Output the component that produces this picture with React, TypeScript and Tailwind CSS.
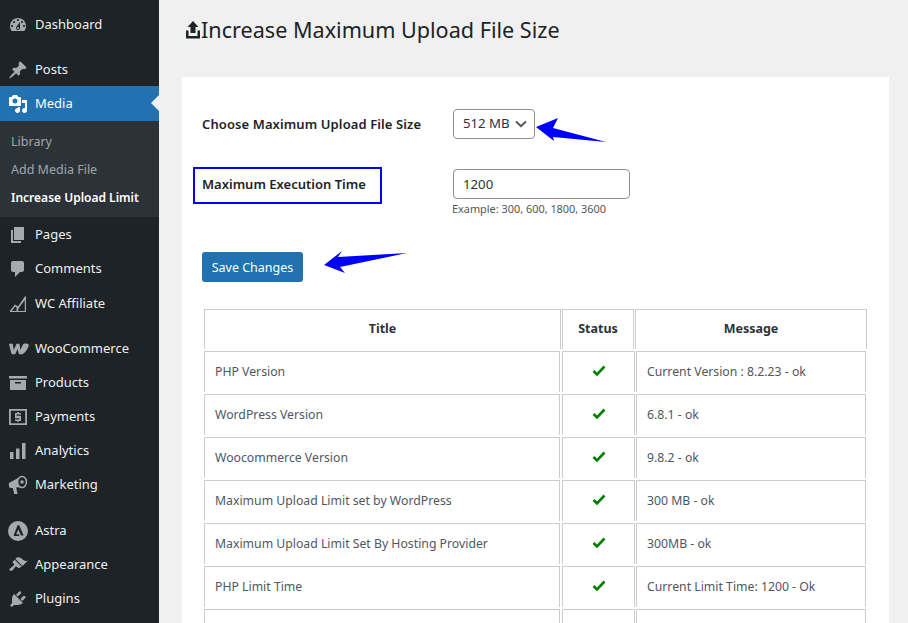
import { ReactNode } from "react"

const Dash = ({ d }: { d: string }) => (
    <svg viewBox="0 0 20 20" className="w-5 h-5 fill-current"><path d={d} /></svg>
)

const icons: Record<string, ReactNode> = {
    dashboard: <Dash d="M3.76 16h12.48c1.1-1.37 1.76-3.11 1.76-5 0-4.42-3.58-8-8-8s-8 3.58-8 8c0 1.89.66 3.63 1.76 5zM10 4c.55 0 1 .45 1 1s-.45 1-1 1-1-.45-1-1 .45-1 1-1zM6 6c.55 0 1 .45 1 1s-.45 1-1 1-1-.45-1-1 .45-1 1-1zm8 0c.55 0 1 .45 1 1s-.45 1-1 1-1-.45-1-1 .45-1 1-1zm-5.37 5.55L12 7v6c0 1.1-.9 2-2 2s-2-.9-2-2c0-.57.24-1.08.63-1.45zM4 10c.55 0 1 .45 1 1s-.45 1-1 1-1-.45-1-1 .45-1 1-1zm12 0c.55 0 1 .45 1 1s-.45 1-1 1-1-.45-1-1 .45-1 1-1zm-5 3c0-.55-.45-1-1-1s-1 .45-1 1 .45 1 1 1 1-.45 1-1z" />,
    posts: <Dash d="M10.44 3.02l1.82-1.82 6.36 6.35-1.83 1.82c-1.05-.68-2.48-.57-3.41.36l-.75.75c-.92.93-1.04 2.35-.35 3.41l-1.83 1.82-2.41-2.41-2.8 2.79c-.42.42-3.38 2.71-3.8 2.29s1.86-3.39 2.28-3.81l2.79-2.79L4.1 9.36l1.83-1.82c1.05.69 2.48.57 3.4-.36l.75-.75c.93-.92 1.05-2.35.36-3.41z" />,
    media: <Dash d="M13 11V4c0-.55-.45-1-1-1h-1.67L9 1H5L3.67 3H2c-.55 0-1 .45-1 1v7c0 .55.45 1 1 1h10c.55 0 1-.45 1-1zM7 4.5c1.38 0 2.5 1.12 2.5 2.5S8.38 9.5 7 9.5 4.5 8.38 4.5 7 5.62 4.5 7 4.5zM14 6h5v10.5c0 1.38-1.12 2.5-2.5 2.5S14 17.88 14 16.5s1.12-2.5 2.5-2.5c.17 0 .34.02.5.05V9h-3V6zm-4 8.05V13h2v3.5c0 1.38-1.12 2.5-2.5 2.5S7 17.88 7 16.5 8.12 14 9.5 14c.17 0 .34.02.5.05z" />,
    pages: <Dash d="M6 15V2h10v13H6zm-1 1h8v2H3V5h2v11z" />,
    comments: <Dash d="M5 2h9c1.1 0 2 .9 2 2v7c0 1.1-.9 2-2 2h-2l-5 5v-5H5c-1.1 0-2-.9-2-2V4c0-1.1.9-2 2-2z" />,
    affiliate: <Dash d="M2 18 L2 16.8 L7 10.5 L10 12.5 L16.5 3 L18 2 V18 Z M3.8 17 H8.5 V13.5 L7.2 12.4 Z M10 17 H16.8 V6 L10.8 14 Z" />,
    woo: (
        <svg viewBox="0 0 22 12" className="w-[21px] h-[12px] fill-current">
            <path d="M1 0.5 H5 L6 7 L9 0.5 H12 L13 7 L15.5 1.5 C16.5 0 20 -0.3 21.5 1 C22.5 3 19 9.5 15 11.5 H11.5 L10 6 L7.5 11.5 H4 C2.8 8 1.6 4 1 0.5 Z" />
        </svg>
    ),
    products: <Dash d="M1 3h18v2.5H1zM2 7h16v10H2zM7 9v1.5h6V9z" />,
    payments: (
        <svg viewBox="0 0 20 20" className="w-5 h-5 fill-current">
            <path fillRule="evenodd" d="M1 2h18v16H1zM2.8 3.8v12.4h14.4V3.8z" />
            <path d="M9.2 5h1.6v1H13v1.6H8.6v1.2H13V14h-2.2v1H9.2v-1H7v-1.6h4.4v-1.2H7V6h2.2z" />
        </svg>
    ),
    analytics: <Dash d="M2 11h3.5v7H2zM8 7.5h3.5V18H8zM14 2h3.5v16H14z" />,
    marketing: (
        <svg viewBox="0 0 20 20" className="w-5 h-5 fill-current">
            <path d="M1 8 L12 2 L13 12 L8.2 12.6 L9.6 19 H6.2 L4.8 13 H2.5 C1 13 0.5 9.5 1 8 Z" />
            <ellipse cx="14" cy="7" rx="4.4" ry="5.6" className="fill-[#1d2327] stroke-current stroke-[1.5]" />
            <circle cx="14" cy="7" r="1.8" />
        </svg>
    ),
    astra: (
        <svg viewBox="0 0 20 20" className="w-5 h-5 fill-current">
            <path fillRule="evenodd" d="M10 0a10 10 0 1 0 0 20a10 10 0 0 0 0-20zM9.6 4.2h1.6L15.6 14.6H13L10.4 8.4L8 13.2H10.6L11.5 15H6.4L5.6 14.6z" />
        </svg>
    ),
    appearance: <Dash d="M14.48 11.06L7.41 3.99l1.5-1.5c.5-.56 2.3-.47 3.51.32 1.21.8 1.43 1.28 2.91 2.1 1.18.64 2.45 1.26 4.45.85zm-.71.71L6.7 4.7 4.93 6.47c-.39.39-.39 1.02 0 1.41l1.06 1.06c.39.39.39 1.03 0 1.42-.6.6-1.43 1.11-2.21 1.69-.35.26-.7.53-1.01.84C1.43 13.23.91 14.56 1.57 15.22c.66.66 1.99 1.14 3.35-.21.31-.31.58-.66.84-1.01.58-.78 1.09-1.61 1.69-2.21.39-.39 1.02-.39 1.41 0l1.06 1.06c.39.39 1.02.39 1.41 0z" />,
    plugins: <Dash d="M13.11 4.36L9.87 7.6 8 5.73l3.24-3.24c.35-.34 1.05-.2 1.56.32.52.51.66 1.21.31 1.55zm-8 1.77l.91-1.12 9.01 9.01-1.19.84c-.71.71-2.63 1.16-3.82 1.16H6.14L4.9 17.26c-.59.59-1.54.59-2.12 0-.59-.58-.59-1.53 0-2.12l1.24-1.24v-3.88c0-1.13.4-3.19 1.09-3.89zm7.26 3.97l3.24-3.24c.34-.35 1.04-.21 1.55.31.52.51.66 1.21.31 1.55l-3.24 3.25z" />,
}

function MenuItem({ icon, label, className = "" }: { icon: string; label: string; className?: string }) {
    return (
        <li className={"flex items-center h-[34px] pt-[2px] text-[#f0f0f1] " + className}>
            <span className="w-[35px] flex justify-center pl-[1px] text-[#a7aaad]">{icons[icon]}</span>
            <span>{label}</span>
        </li>
    )
}

const rows = [
    ["PHP Version", "Current Version : 8.2.23 - ok"],
    ["WordPress Version", "6.8.1 - ok"],
    ["Woocommerce Version", "9.8.2 - ok"],
    ["Maximum Upload Limit set by WordPress", "300 MB - ok"],
    ["Maximum Upload Limit Set By Hosting Provider", "300MB - ok"],
    ["PHP Limit Time", "Current Limit Time: 1200 - Ok"],
    ["", ""],
]

const cell = "border border-b-0 border-[#ccc] h-[41px] flex items-center"
const headCell = "border border-b-0 border-[#ccc] h-[40px] flex items-center justify-center"

export default function App() {
    return (
        <div className="flex h-[623px] w-[908px] overflow-hidden bg-[#f0f0f1] font-['Noto_Sans',sans-serif] text-[13px]">
            <aside className="w-[159px] shrink-0 bg-[#1d2327] pt-[7px]">
                <ul><MenuItem icon="dashboard" label="Dashboard" /></ul>
                <ul className="mt-[11px]">
                    <MenuItem icon="posts" label="Posts" />
                    <li className="relative flex items-center h-[35px] bg-[#2271b1] text-white">
                        <span className="w-[35px] flex justify-center pl-[1px]">{icons.media}</span>
                        <span>Media</span>
                        <span className="absolute right-0 top-[9px] border-y-[8px] border-r-[8px] border-y-transparent border-r-[#f0f0f1]" />
                    </li>
                    <li className="bg-[#2c3338] h-[96px] pt-[7px] pl-[11px] text-[12.5px] text-[#c3c4c7]/80">
                        <div className="h-[28px] leading-[28px]">Library</div>
                        <div className="h-[28px] leading-[28px]">Add Media File</div>
                        <div className="h-[28px] leading-[28px] text-[12px] font-semibold text-white">Increase Upload Limit</div>
                    </li>
                    <MenuItem icon="pages" label="Pages" />
                    <MenuItem icon="comments" label="Comments" />
                    <MenuItem icon="affiliate" label="WC Affiliate" className="mt-[1px]" />
                </ul>
                <ul className="mt-[11px]">
                    <MenuItem icon="woo" label="WooCommerce" />
                    <MenuItem icon="products" label="Products" />
                    <MenuItem icon="payments" label="Payments" />
                    <MenuItem icon="analytics" label="Analytics" />
                    <MenuItem icon="marketing" label="Marketing" />
                </ul>
                <ul className="mt-[12px]">
                    <MenuItem icon="astra" label="Astra" />
                    <MenuItem icon="appearance" label="Appearance" />
                    <MenuItem icon="plugins" label="Plugins" />
                </ul>
            </aside>

            <main className="flex-1 pl-[23px] pr-[19px]">
                <h1 className="flex items-center h-[77px] pb-[17px] pl-[3px] text-[21.6px] text-[#1d2327]">
                    <svg viewBox="0 0 16 20" className="w-[16px] h-[20px] fill-[#1d2327]">
                        <path d="M8 1 L13.5 7 H10.5 V13 H5.5 V7 H2.5 Z M1 10.5 H3.5 V16 H12.5 V10.5 H15 V18.5 H1 Z" />
                    </svg>
                    Increase Maximum Upload File Size
                </h1>

                <section className="relative bg-white h-[600px] pt-[32px] px-[20px] text-[#2c3338]">
                    <div className="flex items-center h-[30px]">
                        <label className="w-[251px] pt-[2px] font-semibold tracking-[0.1px] text-[#1d2327]">Choose Maximum Upload File Size</label>
                        <div className="w-[82px] h-[30px] border border-[#8c8f94] rounded-[4px] flex items-center justify-between pl-[9px] pr-[7px] text-[13.2px]">
                            <span>512 MB</span>
                            <svg viewBox="0 0 12 8" className="w-[12px] h-[8px] fill-none stroke-[#555] stroke-2"><path d="M1 1.5 L6 6.2 L11 1.5" /></svg>
                        </div>
                    </div>

                    <div className="flex mt-[28px]">
                        <label className="w-[189px] -ml-[9px] h-[37px] pb-[2px] border-2 border-[#0000ff] flex items-center pl-[7px] font-semibold text-[#1d2327]">Maximum Execution Time</label>
                        <div className="ml-[71px] mt-[2px]">
                            <input readOnly value="1200" className="block w-[177px] h-[30px] border border-[#8c8f94] rounded-[4px] px-[9px] text-[13.2px] bg-white outline-none" />
                            <p className="mt-[2px] -ml-[1px] text-[10.9px] text-[#50575e]">Example: 300, 600, 1800, 3600</p>
                        </div>
                    </div>

                    <button className="block mt-[35px] w-[101px] h-[30px] pt-[2px] bg-[#2271b1] text-white rounded-[3px] text-[12.5px]">Save Changes</button>

                    <div className="mt-[27px] ml-[2px] text-[#50575e] text-[12.25px]">
                        <div className="grid grid-cols-[357px_72px_232px] gap-x-[1px] h-[40px] text-[12.5px] font-bold text-[#2c3338]">
                            <div className={headCell}>Title</div>
                            <div className={headCell}>Status</div>
                            <div className={headCell}>Message</div>
                        </div>
                        {rows.map((row, i) => (
                            <div key={i} className="grid grid-cols-[356px_73px_230px] gap-x-[1.5px] mt-[2px]">
                                <div className={cell + " pl-[10px]"}>{row[0]}</div>
                                <div className={cell + " justify-center"}>
                                    {row[0] && (
                                        <svg viewBox="0 0 14 12" className="w-[14px] h-[12px] ml-[1px] -mt-[3px] fill-none stroke-[#008000] stroke-[2.6]"><path d="M1.5 6 L5 9.5 L12.5 1.5" /></svg>
                                    )}
                                </div>
                                <div className={cell + " pl-[10px]"}>{row[1]}</div>
                            </div>
                        ))}
                    </div>

                    <svg viewBox="0 0 707 300" className="absolute left-0 top-0 w-[707px] h-[300px] fill-[#0000ff] pointer-events-none">
                        <polygon points="354,50 376,41 371,51 424,65 371,60 372,64" />
                        <polygon points="142,188 160,174 156,180 225,176 158,190 163,196" />
                    </svg>
                </section>
            </main>
        </div>
    )
}
